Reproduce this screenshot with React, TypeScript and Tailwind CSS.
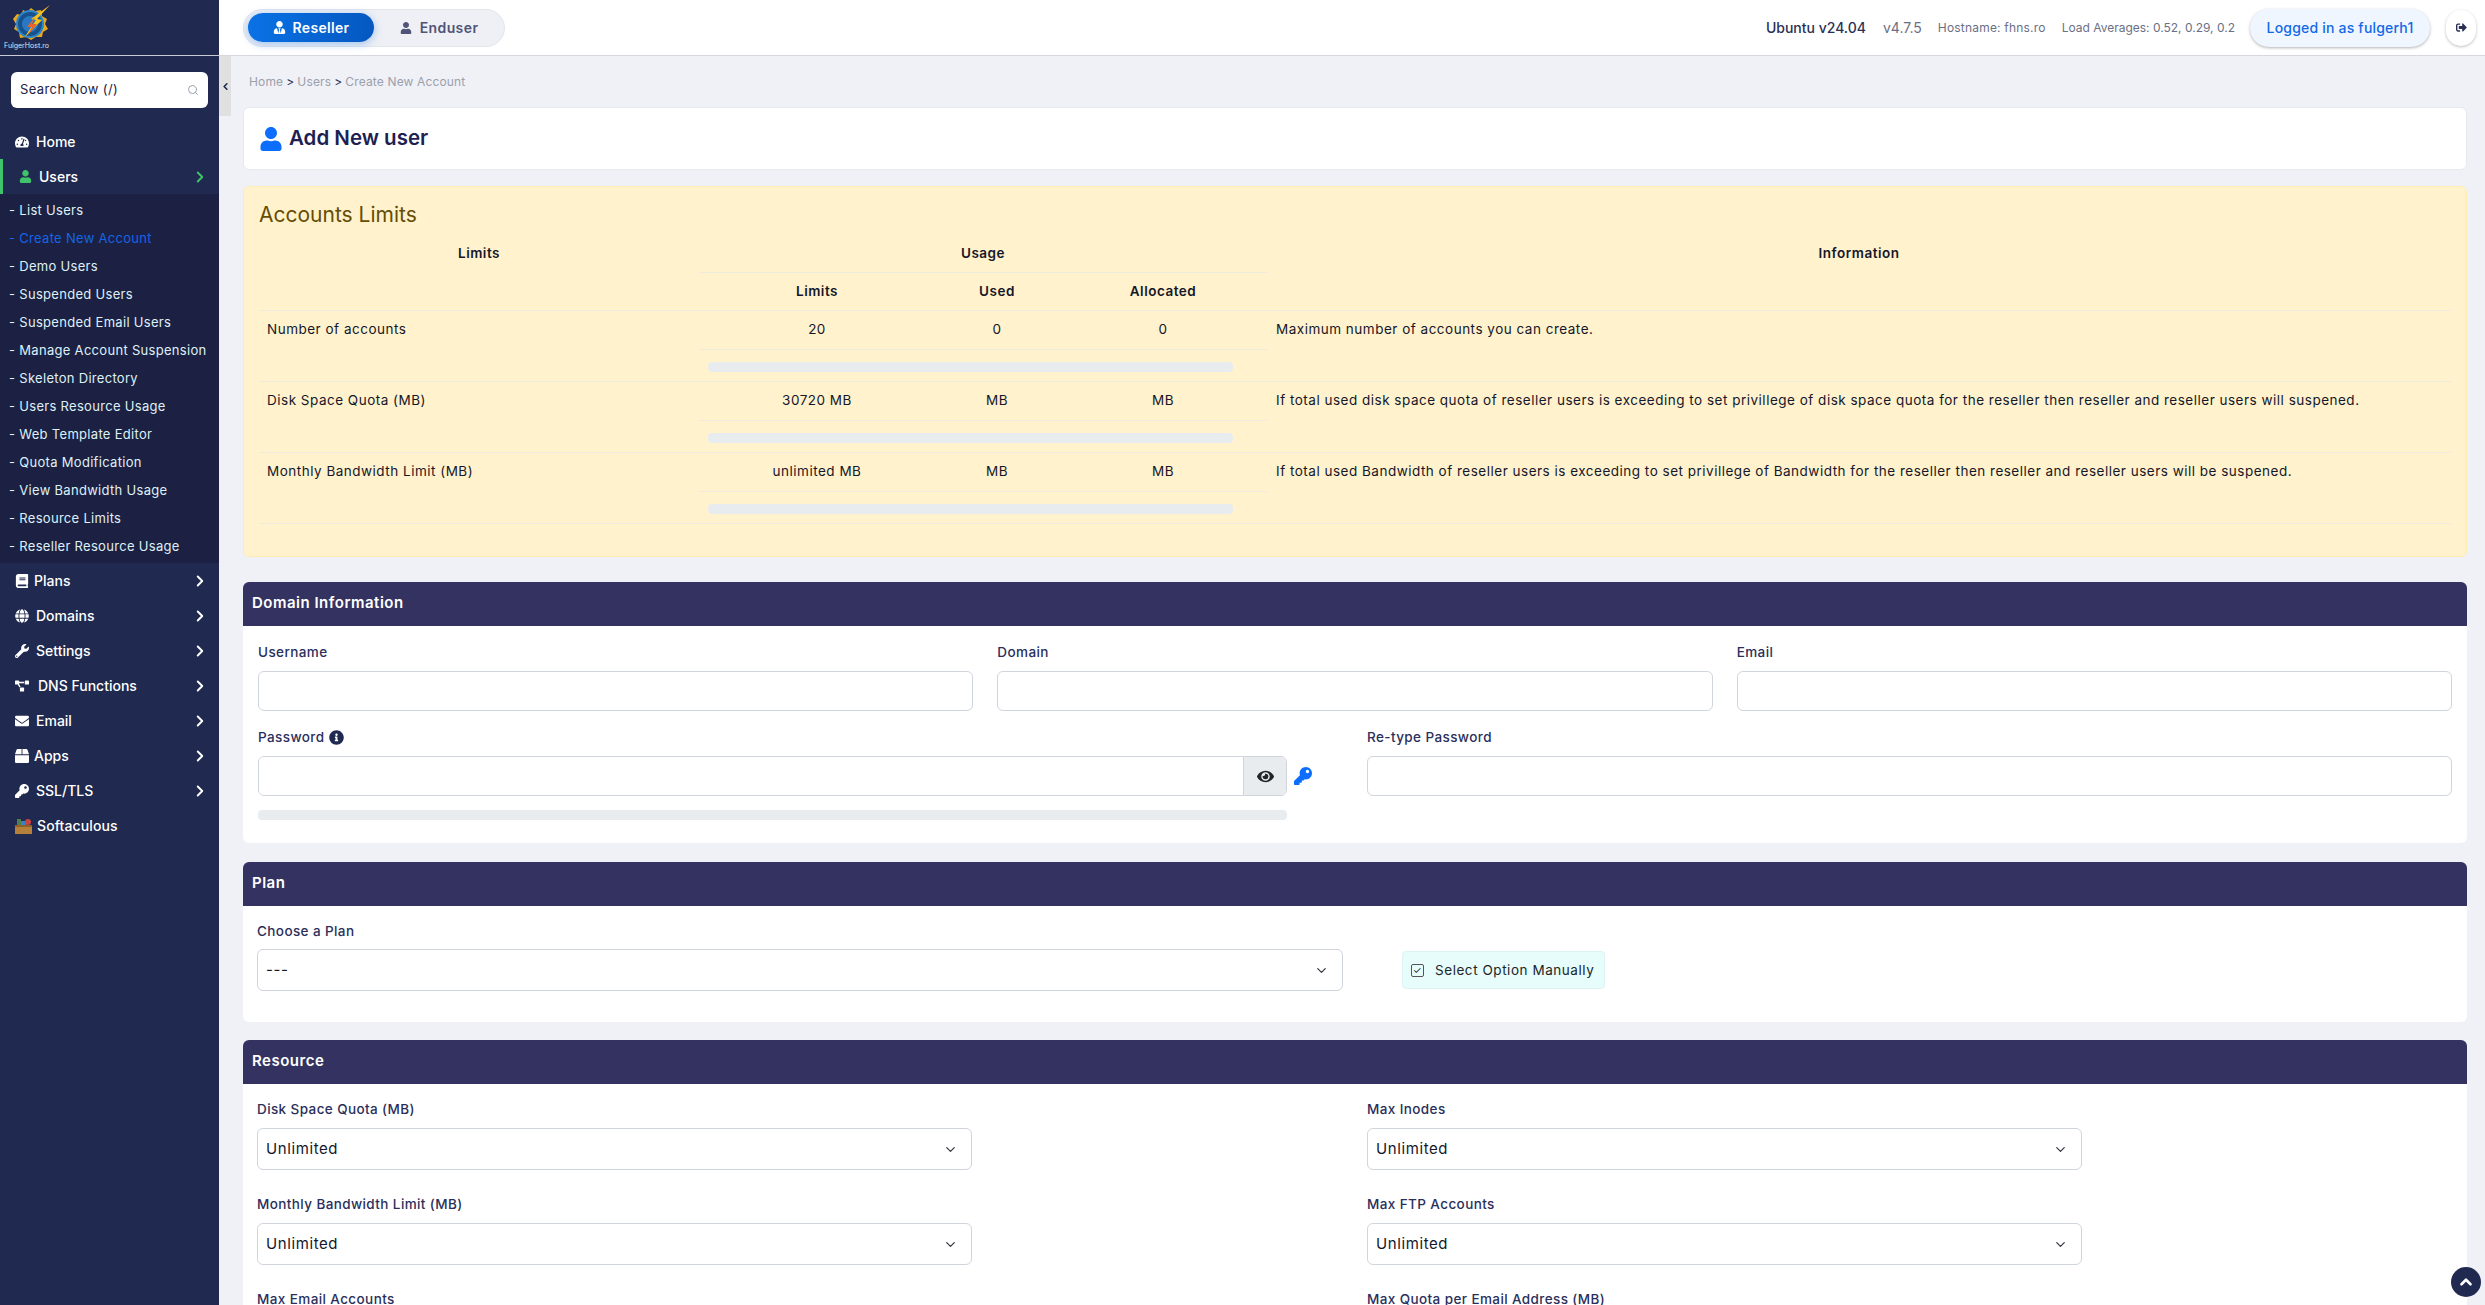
import { ChevronRight, ChevronDown, Search, ChevronLeft, ChevronUp } from 'lucide-react';
import {
  FaTachometerAlt,
  FaUser,
  FaUserTie,
  FaBook,
  FaGlobe,
  FaWrench,
  FaProjectDiagram,
  FaEnvelope,
  FaBox,
  FaKey,
  FaEye,
  FaInfoCircle,
  FaSignOutAlt,
} from 'react-icons/fa';

const subItems = [
  'List Users',
  'Create New Account',
  'Demo Users',
  'Suspended Users',
  'Suspended Email Users',
  'Manage Account Suspension',
  'Skeleton Directory',
  'Users Resource Usage',
  'Web Template Editor',
  'Quota Modification',
  'View Bandwidth Usage',
  'Resource Limits',
  'Reseller Resource Usage',
];

const menuItems = [
  { label: 'Plans', icon: FaBook, gap: 'gap-[5px]' },
  { label: 'Domains', icon: FaGlobe, gap: 'gap-[7px]' },
  { label: 'Settings', icon: FaWrench, gap: 'gap-[7px]' },
  { label: 'DNS Functions', icon: FaProjectDiagram, gap: 'gap-[9px]' },
  { label: 'Email', icon: FaEnvelope, gap: 'gap-[7px]' },
  { label: 'Apps', icon: FaBox, gap: 'gap-[5px]' },
  { label: 'SSL/TLS', icon: FaKey, gap: 'gap-[7px]' },
];

const limits = [
  {
    name: 'Number of accounts',
    limit: '20',
    used: '0',
    allocated: '0',
    info: 'Maximum number of accounts you can create.',
  },
  {
    name: 'Disk Space Quota (MB)',
    limit: '30720 MB',
    used: 'MB',
    allocated: 'MB',
    info: 'If total used disk space quota of reseller users is exceeding to set privillege of disk space quota for the reseller then reseller and reseller users will suspened.',
  },
  {
    name: 'Monthly Bandwidth Limit (MB)',
    limit: 'unlimited MB',
    used: 'MB',
    allocated: 'MB',
    info: 'If total used Bandwidth of reseller users is exceeding to set privillege of Bandwidth for the reseller then reseller and reseller users will be suspened.',
  },
];

function Logo() {
  return (
    <svg width="44" height="42" viewBox="0 0 44 42">
      <path
        d="M8 12 L12 13 L14 8 L18 10 L22 6 L26 9 L32 8 L33 14 L38 17 L36 22 L39 27 L34 30 L33 35 L27 35 L22 38 L17 35 L11 36 L10 30 L5 27 L7 22 L4 17 Z"
        fill="#e9a91c"
      />
      <circle cx="21" cy="22" r="13" fill="#17528f" stroke="#2d86c9" strokeWidth="2" />
      <circle cx="21" cy="22" r="8" fill="#2a78c4" />
      <path d="M41 3 L22 17 L27 18 L15 36 L33 18 L28 17 Z" fill="#f6c21c" />
      <path d="M26 15 L18 25 L23 25 L19 33 L28 22 L23 22 Z" fill="#e8622a" />
    </svg>
  );
}

function SoftaculousIcon() {
  return (
    <svg width="17" height="17" viewBox="0 0 17 17">
      <rect x="0" y="9" width="17" height="8" fill="#b5803a" />
      <rect x="0" y="8" width="17" height="2" fill="#8f6128" />
      <rect x="2" y="2" width="4" height="6" fill="#4f7f4a" />
      <rect x="6" y="4" width="5" height="4" fill="#3b82c4" />
      <circle cx="13" cy="5" r="3" fill="#c8453f" />
    </svg>
  );
}

function Sidebar() {
  return (
    <aside className="w-[219px] shrink-0 bg-[#20294f] text-white">
      <div className="h-[56px] border-b border-[#c9ccd4] pl-[4px] relative">
        <div className="flex flex-col items-start">
          <div className="ml-[5px] mt-[2px]">
            <Logo />
          </div>
          <span className="text-[7px] leading-[8px] -mt-[2px] text-[#dfe3ee]">FulgerHost.ro</span>
        </div>
      </div>

      <div className="px-[11px] pt-[16px] pb-[16px]">
        <div className="h-[36px] bg-white rounded-md flex items-center justify-between pl-[9px] pr-[9px] text-[#1d2244] text-[13px] tracking-[0.4px]">
          <span>Search Now (/)</span>
          <Search size={12} className="text-gray-400" />
        </div>
      </div>

      <div className="h-[35px] flex items-center pl-[15px] gap-[7px] text-[14px] font-medium">
        <FaTachometerAlt size={14} />
        <span>Home</span>
      </div>
      <div className="h-[35px] flex items-center pl-[19px] pr-[10px] border-l-[3px] border-[#3fc46b] gap-[7px] text-[14px] font-medium">
        <FaUser size={13} className="text-[#3fc46b] ml-[-3px]" />
        <span className="flex-1">Users</span>
        <ChevronRight size={18} strokeWidth={2.5} className="text-[#3fc46b]" />
      </div>

      <div className="bg-[#1c2143] pt-[3px] pb-[2px]">
        {subItems.map((item) => (
          <div
            key={item}
            className={`h-[28px] flex items-center pl-[9px] text-[13px] tracking-[0.3px] whitespace-nowrap ${
              item === 'Create New Account' ? 'text-[#1464e6]' : 'text-[#dff0f7]'
            }`}
          >
            - <span className="ml-[4px]">{item}</span>
          </div>
        ))}
      </div>

      {menuItems.map((m) => {
        const Icon = m.icon;
        return (
          <div key={m.label} className={`h-[35px] flex items-center pl-[15px] pr-[10px] text-[14px] font-medium ${m.gap}`}>
            <Icon size={14} />
            <span className="flex-1">{m.label}</span>
            <ChevronRight size={18} strokeWidth={2.5} />
          </div>
        );
      })}
      <div className="h-[35px] flex items-center pl-[15px] gap-[5px] text-[14px] font-medium tracking-[0.1px]">
        <SoftaculousIcon />
        <span>Softaculous</span>
      </div>
    </aside>
  );
}

function TopBar() {
  return (
    <header className="h-[56px] shrink-0 bg-white border-b border-[#d6d8dd] flex items-center justify-between pl-[24px] pr-[9px]">
      <div className="w-[262px] h-[38px] rounded-full bg-[#eef0f5] border border-[#e2e5ec] flex items-center pl-[4px]">
        <div className="w-[126px] h-[29px] rounded-full bg-gradient-to-r from-[#0a72e6] to-[#0558c0] shadow-[0_2px_8px_rgba(10,110,230,0.35)] text-white text-[14px] tracking-[0.3px] font-semibold flex items-center justify-center gap-[7px]">
          <FaUserTie size={13} />
          <span>Reseller</span>
        </div>
        <div className="flex-1 flex items-center justify-center gap-[8px] text-[#4f5478] text-[14px] tracking-[0.4px] font-semibold">
          <FaUser size={12} />
          <span>Enduser</span>
        </div>
      </div>

      <div className="flex items-center">
        <span className="text-[14px] font-medium text-[#2b3054] mr-[17px]">Ubuntu v24.04</span>
        <span className="text-[14px] text-[#6b7085] mr-[16px]">v4.7.5</span>
        <span className="text-[12px] tracking-[0.2px] text-[#6b7085] mr-[16px]">Hostname: fhns.ro</span>
        <span className="text-[12px] text-[#6b7085] mr-[15px]">Load Averages: 0.52, 0.29, 0.2</span>
        <div className="w-[180px] h-[38px] rounded-full bg-[#eff6ff] shadow-[0_1px_3px_rgba(0,0,0,0.3)] text-[#1269e6] text-[14px] tracking-[0.2px] font-medium flex items-center justify-center mr-[16px]">
          Logged in as fulgerh1
        </div>
        <div className="w-[30px] h-[36px] rounded-full bg-white shadow-[0_1px_3px_rgba(0,0,0,0.25)] flex items-center justify-center text-[#2b3054]">
          <FaSignOutAlt size={11} />
        </div>
      </div>
    </header>
  );
}

function LimitsCard() {
  return (
    <section className="h-[371px] bg-[#fff2cc] border border-[#ffecb5] rounded-md px-[15px] pt-[14px] mb-[25px]">
      <h2 className="text-[21px] leading-[28px] text-[#664d03] mb-[5px]">Accounts Limits</h2>
      <table className="w-full table-fixed border-collapse text-[13.5px] tracking-[0.5px] text-[#15172a]">
        <colgroup>
          <col className="w-[440px]" />
          <col className="w-[236px]" />
          <col className="w-[124px]" />
          <col className="w-[208px]" />
          <col />
        </colgroup>
        <thead>
          <tr className="h-[38px]">
            <th rowSpan={2} className="align-top pt-[9px] font-semibold border-b border-[#ecebdc]">Limits</th>
            <th colSpan={3} className="font-semibold border-b border-[#ecebdc]">Usage</th>
            <th rowSpan={2} className="align-top pt-[9px] font-semibold border-b border-[#ecebdc]">Information</th>
          </tr>
          <tr className="h-[38px]">
            <th className="font-semibold border-b border-[#ecebdc]">Limits</th>
            <th className="font-semibold border-b border-[#ecebdc]">Used</th>
            <th className="font-semibold border-b border-[#ecebdc]">Allocated</th>
          </tr>
        </thead>
        <tbody>
          {limits.map((row) => (
            <>
              <tr key={row.name} className="h-[39px]">
                <td rowSpan={2} className="align-top pt-[8px] pl-[8px] border-b border-[#ecebdc] whitespace-nowrap">{row.name}</td>
                <td className="text-center border-b border-[#ecebdc]">{row.limit}</td>
                <td className="text-center border-b border-[#ecebdc]">{row.used}</td>
                <td className="text-center border-b border-[#ecebdc]">{row.allocated}</td>
                <td rowSpan={2} className="align-top pt-[8px] pl-[9px] border-b border-[#ecebdc] whitespace-nowrap">{row.info}</td>
              </tr>
              <tr className="h-[32px]">
                <td colSpan={3} className="pl-[9px] pr-[34px] pt-[4px] border-b border-[#ecebdc]">
                  <div className="h-[10px] rounded bg-[#e9ecef]" />
                </td>
              </tr>
            </>
          ))}
        </tbody>
      </table>
    </section>
  );
}

function CardHeader({ title }: { title: string }) {
  return (
    <div className="h-[44px] pb-[2px] bg-[#343260] rounded-t-md flex items-center pl-[9px] text-white text-[15px] tracking-[0.5px] font-semibold">
      {title}
    </div>
  );
}

function Field({ label, children }: { label: React.ReactNode; children: React.ReactNode }) {
  return (
    <div>
      <div className="h-[19px] flex items-center gap-[5px] text-[13.5px] tracking-[0.4px] font-medium text-[#2a2f5b] mb-[9px]">{label}</div>
      {children}
    </div>
  );
}

function TextBox() {
  return <div className="h-[40px] bg-white border border-[#d0d4dc] rounded-md" />;
}

function SelectBox({ value }: { value: string }) {
  return (
    <div className="h-[42px] bg-white border border-[#d0d4dc] rounded-md flex items-center justify-between pl-[8px] pr-[13px] text-[15px] tracking-[0.6px] text-[#15172a]">
      <span>{value}</span>
      <ChevronDown size={15} className="text-[#343a40]" />
    </div>
  );
}

function DomainCard() {
  return (
    <section className="bg-white rounded-md mb-[19px]">
      <CardHeader title="Domain Information" />
      <div className="h-[217px] px-[15px] pt-[17px]">
        <div className="grid grid-cols-3 gap-x-[24px]">
          <Field label="Username"><TextBox /></Field>
          <Field label="Domain"><TextBox /></Field>
          <Field label="Email"><TextBox /></Field>
        </div>
        <div className="grid grid-cols-2 gap-x-[24px] mt-[17px]">
          <div>
            <Field
              label={
                <>
                  Password <FaInfoCircle size={15} className="text-[#20294f]" />
                </>
              }
            >
              <div className="flex items-center">
                <div className="w-[1029px] h-[40px] flex border border-[#d0d4dc] rounded-md overflow-hidden">
                  <div className="flex-1 bg-white" />
                  <div className="w-[43px] bg-[#e9ecef] border-l border-[#d0d4dc] flex items-center justify-center text-[#212529]">
                    <FaEye size={17} />
                  </div>
                </div>
                <FaKey size={18} className="text-[#0d6efd] ml-[7px]" />
              </div>
            </Field>
            <div className="w-[1029px] h-[10px] rounded bg-[#e9ecef] mt-[14px]" />
          </div>
          <Field label="Re-type Password"><TextBox /></Field>
        </div>
      </div>
    </section>
  );
}

function PlanCard() {
  return (
    <section className="bg-white rounded-md mb-[18px]">
      <CardHeader title="Plan" />
      <div className="h-[116px] px-[14px] pt-[15px]">
        <div className="text-[13.5px] tracking-[0.4px] font-medium text-[#2a2f5b] h-[20px] flex items-center mb-[8px]">Choose a Plan</div>
        <div className="flex items-center">
          <div className="w-[1086px]">
            <SelectBox value="---" />
          </div>
          <div className="ml-[59px] w-[203px] h-[38px] bg-[#e6fdfb] border border-[#dcf5f3] rounded flex items-center pl-[8px] gap-[11px] text-[13.5px] tracking-[0.55px] text-[#212529]">
            <span className="w-[13px] h-[13px] border border-[#555] rounded-[2px] flex items-center justify-center text-[10px] leading-none">✓</span>
            Select Option Manually
          </div>
        </div>
      </div>
    </section>
  );
}

function ResourceCard() {
  const fields = [
    ['Disk Space Quota (MB)', 'Max Inodes'],
    ['Monthly Bandwidth Limit (MB)', 'Max FTP Accounts'],
    ['Max Email Accounts', 'Max Quota per Email Address (MB)'],
  ];
  return (
    <section className="bg-white rounded-t-md">
      <CardHeader title="Resource" />
      <div className="grid grid-cols-2 gap-x-[24px] gap-y-[25px] px-[14px] pt-[16px] pb-[20px]">
        {fields.flat().map((f) => (
          <Field key={f} label={f}>
            <div className="w-[715px]">
              <SelectBox value="Unlimited" />
            </div>
          </Field>
        ))}
      </div>
    </section>
  );
}

export default function App() {
  return (
    <div
      className="h-[1305px] w-full flex overflow-hidden bg-[#f0f1f6]"
      style={{ fontFamily: 'Inter, "Noto Sans", sans-serif' }}
    >
      <Sidebar />
      <div className="flex-1 min-w-0 flex flex-col relative">
        <TopBar />
        <div className="absolute left-0 top-[56px] w-[12px] h-[60px] bg-[#e0e0e0] flex items-center justify-center text-[#20294f]">
          <ChevronLeft size={11} strokeWidth={3.5} />
        </div>
        <main className="flex-1 overflow-hidden pl-[24px] pr-[18px]">
          <div className="h-[51px] flex items-center pl-[6px] text-[12px] tracking-[0.15px] text-[#9aa0ac] gap-[3px] pt-[1px]">
            <span>Home</span>
            <span className="text-[#2b3054]">&gt;</span>
            <span>Users</span>
            <span className="text-[#2b3054]">&gt;</span>
            <span>Create New Account</span>
          </div>
          <div className="h-[63px] bg-white border border-[#e8e9ee] rounded-md flex items-center pl-[15px] gap-[6px] mb-[16px]">
            <FaUser size={24} className="text-[#0d6efd]" />
            <h1 className="text-[20.5px] font-semibold text-[#1c2152]">Add New user</h1>
          </div>
          <LimitsCard />
          <DomainCard />
          <PlanCard />
          <ResourceCard />
        </main>
        <div className="fixed right-[4px] bottom-[8px] w-[30px] h-[30px] rounded-full bg-[#20294f] flex items-center justify-center text-white">
          <ChevronUp size={18} strokeWidth={3.5} />
        </div>
      </div>
    </div>
  );
}
